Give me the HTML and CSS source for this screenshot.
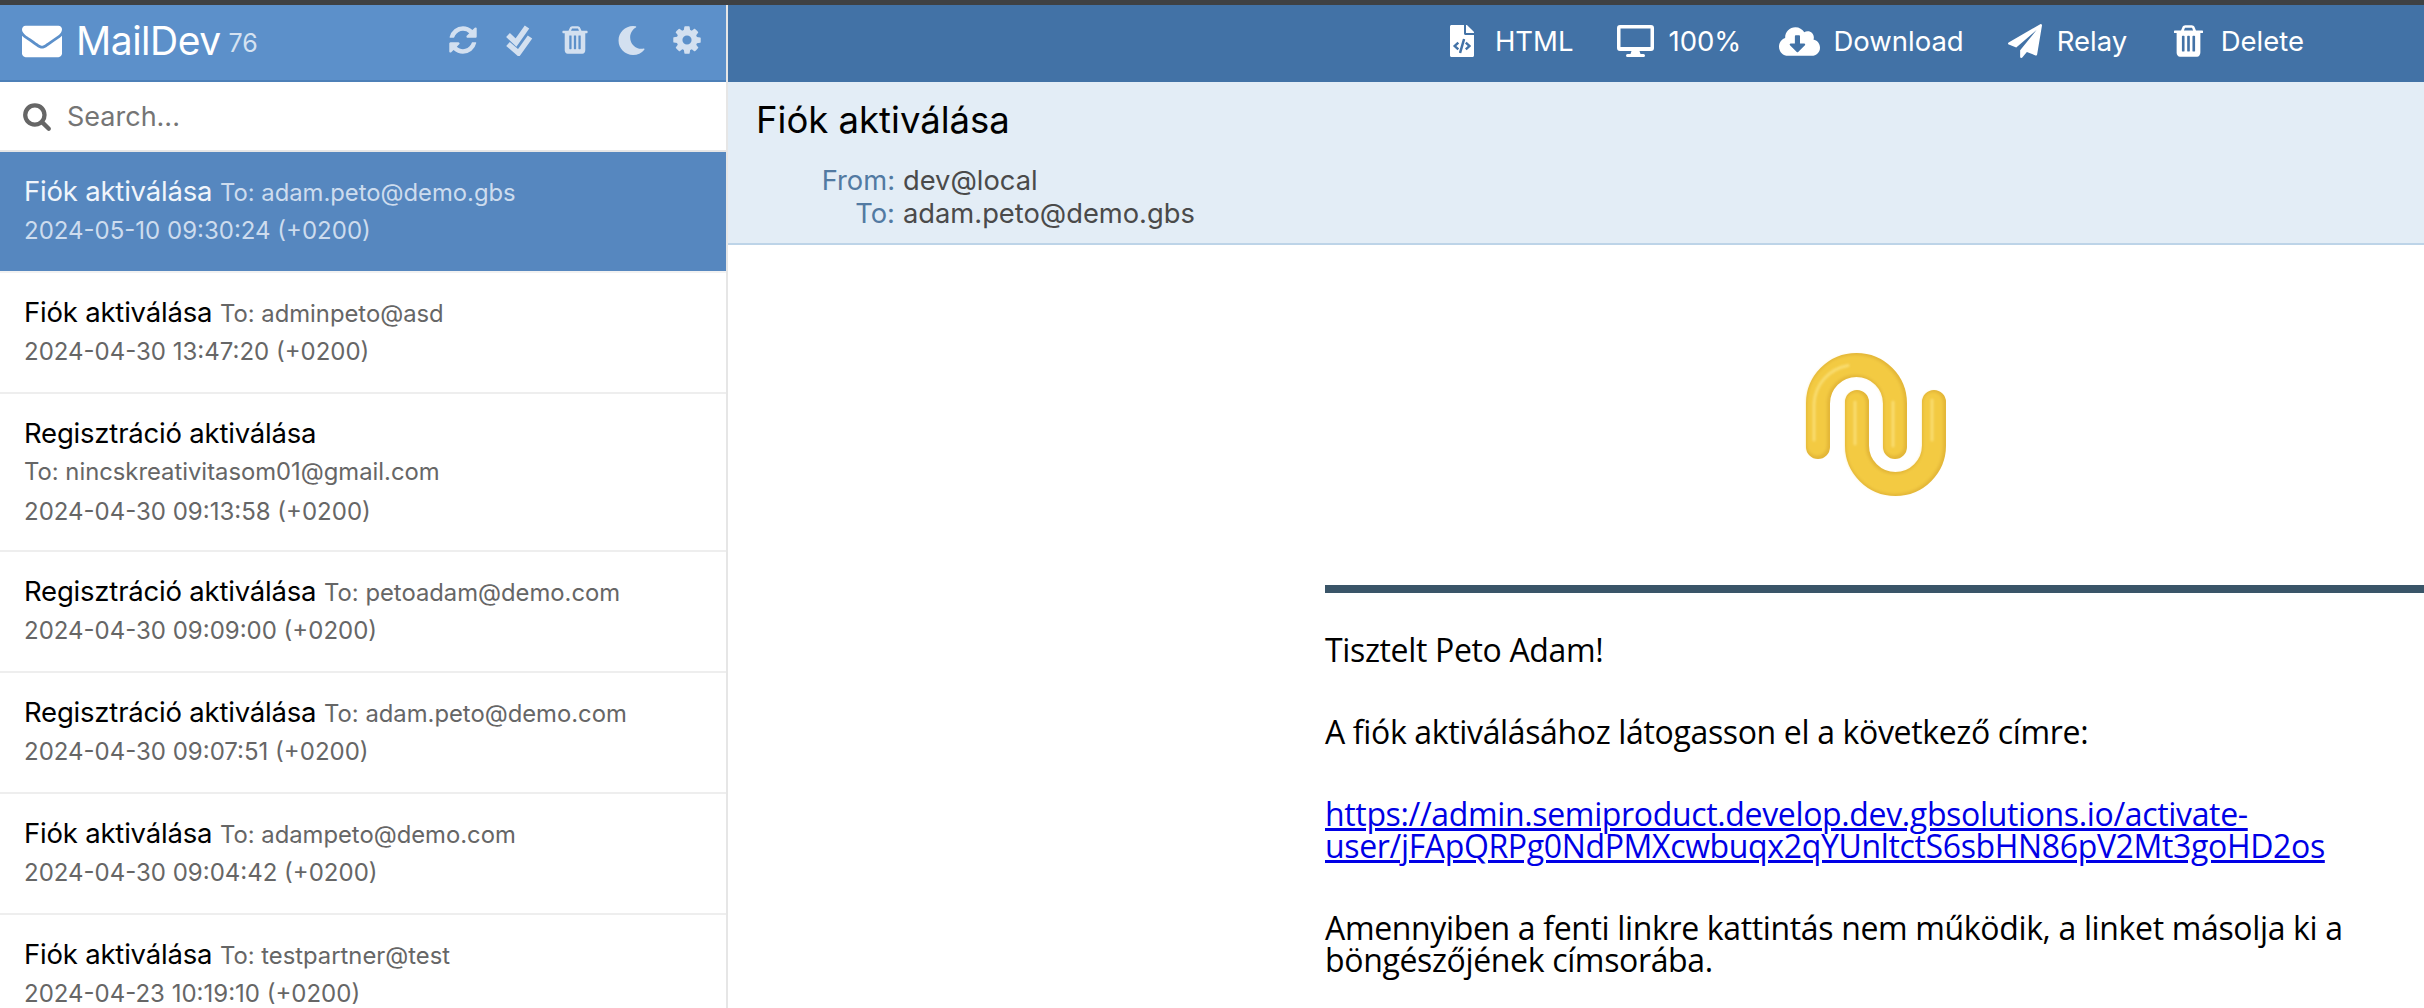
FILE: index.html
```html
<!DOCTYPE html>
<html lang="hu">
<head>
<meta charset="utf-8">
<title>MailDev</title>
<link rel="stylesheet" href="styles.css">
</head>
<body>
<div class="app">
  <aside class="sidebar">
    <header class="brandbar">
      <svg class="ico-env" viewBox="0 0 1792 1792"><path d="M1792 710v794q0 66-47 113t-113 47h-1472q-66 0-113-47t-47-113v-794q44 49 101 87 362 246 497 345 57 42 92.5 65.5t94.5 48 110 24.5h2q51 0 110-24.5t94.5-48 92.5-65.5q170-123 498-345 57-39 100-87zm0-294q0 79-49 151t-122 123q-376 261-468 325-10 7-42.5 30.5t-54 38-52 32.5-57.5 27-50 9h-2q-23 0-50-9t-57.5-27-52-32.5-54-38-42.5-30.5q-91-64-262-182.5t-205-142.5q-62-42-117-115.5t-55-136.5q0-78 41.5-130t118.5-52h1472q65 0 112.5 47t47.5 113z"/></svg>
      <span class="brand">MailDev</span>
      <span class="count">76</span>
      <nav class="tools">
        <span class="tool"><svg viewBox="0 0 1792 1792"><path d="M1639 1056q0 5-1 7-64 268-268 434.5t-478 166.5q-146 0-282.5-55t-243.5-157l-129 129q-19 19-45 19t-45-19-19-45v-448q0-26 19-45t45-19h448q26 0 45 19t19 45-19 45l-137 137q71 66 161 102t187 36q134 0 250-65t186-179q11-17 53-117 8-23 30-23h192q13 0 22.5 9.5t9.5 22.5zm25-800v448q0 26-19 45t-45 19h-448q-26 0-45-19t-19-45 19-45l138-138q-148-137-349-137-134 0-250 65t-186 179q-11 17-53 117-8 23-30 23h-199q-13 0-22.5-9.5t-9.5-22.5v-7q65-268 270-434.5t480-166.5q146 0 284 55.5t245 156.5l130-129q19-19 45-19t45 19 19 45z"/></svg></span>
        <span class="tool"><svg viewBox="0 0 32 32"><path class="tick" d="M5 11l8 7.5L24 3M5 20l10.5 9L27 13"/></svg></span>
        <span class="tool"><svg viewBox="0 0 1792 1792"><path d="M704 1376v-704q0-14-9-23t-23-9h-64q-14 0-23 9t-9 23v704q0 14 9 23t23 9h64q14 0 23-9t9-23zm256 0v-704q0-14-9-23t-23-9h-64q-14 0-23 9t-9 23v704q0 14 9 23t23 9h64q14 0 23-9t9-23zm256 0v-704q0-14-9-23t-23-9h-64q-14 0-23 9t-9 23v704q0 14 9 23t23 9h64q14 0 23-9t9-23zm-544-992h448l-48-117q-7-9-17-11h-317q-10 2-17 11zm928 32v64q0 14-9 23t-23 9h-96v948q0 83-47 143.5t-113 60.5h-832q-66 0-113-58.5t-47-141.5v-952h-96q-14 0-23-9t-9-23v-64q0-14 9-23t23-9h309l70-167q15-37 54-63t79-26h320q40 0 79 26t54 63l70 167h309q14 0 23 9t9 23z"/></svg></span>
        <span class="tool"><svg class="moon" viewBox="0 0 512 512"><path d="M283.211 512c78.962 0 151.079-35.925 198.857-94.792 7.068-8.708-.639-21.43-11.562-19.35-124.203 23.654-238.262-71.576-238.262-196.954 0-72.222 38.662-138.635 101.498-174.394 9.686-5.512 7.25-20.197-3.756-22.23A258.156 258.156 0 0 0 283.211 0c-141.309 0-256 114.511-256 256 0 141.309 114.511 256 256 256z"/></svg></span>
        <span class="tool"><svg viewBox="0 0 1792 1792"><path d="M1152 896q0-106-75-181t-181-75-181 75-75 181 75 181 181 75 181-75 75-181zm512-109v222q0 12-8 23t-20 13l-185 28q-19 54-39 91 35 50 107 138 10 12 10 25t-9 23q-27 37-99 108t-94 71q-12 0-26-9l-138-108q-44 23-91 38-16 136-29 186-7 28-36 28h-222q-14 0-24.5-8.5t-11.5-21.5l-28-184q-49-16-90-37l-141 107q-10 9-25 9-14 0-25-11-126-114-165-168-7-10-7-23 0-12 8-23 15-21 51-66.5t54-70.5q-27-50-41-99l-183-27q-13-2-21-12.5t-8-23.5v-222q0-12 8-23t19-13l186-28q14-46 39-92-40-57-107-138-10-12-10-24 0-10 9-23 26-36 98.5-107.5t94.5-71.5q13 0 26 10l138 107q44-23 91-38 16-136 29-186 7-28 36-28h222q14 0 24.5 8.5t11.5 21.5l28 184q49 16 90 37l142-107q9-9 24-9 13 0 25 10 129 119 165 170 7 8 7 22 0 12-8 23-15 21-51 66.5t-54 70.5q26 50 41 98l183 28q13 2 21 12.5t8 23.5z"/></svg></span>
      </nav>
    </header>
    <div class="search">
      <svg class="ico-search" viewBox="0 0 1792 1792"><path d="M1216 832q0-185-131.5-316.5t-316.5-131.5-316.5 131.5-131.5 316.5 131.5 316.5 316.5 131.5 316.5-131.5 131.5-316.5zm512 832q0 52-38 90t-90 38q-54 0-90-38l-343-342q-179 124-399 124-143 0-273.5-55.5t-225-150-150-225-55.5-273.5 55.5-273.5 150-225 225-150 273.5-55.5 273.5 55.5 225 150 150 225 55.5 273.5q0 220-124 399l343 343q37 37 37 90z"/></svg>
      <span class="placeholder">Search...</span>
    </div>
    <ul class="list">
      <li class="item is-active"><span class="subj">Fiók aktiválása</span> <span class="meta">To: adam.peto@demo.gbs</span><div class="meta date">2024-05-10 09:30:24 (+0200)</div></li>
      <li class="item"><span class="subj">Fiók aktiválása</span> <span class="meta">To: adminpeto@asd</span><div class="meta date">2024-04-30 13:47:20 (+0200)</div></li>
      <li class="item is-tall"><div class="subj">Regisztráció aktiválása</div><div class="meta to-line">To: nincskreativitasom01@gmail.com</div><div class="meta date">2024-04-30 09:13:58 (+0200)</div></li>
      <li class="item"><span class="subj">Regisztráció aktiválása</span> <span class="meta">To: petoadam@demo.com</span><div class="meta date">2024-04-30 09:09:00 (+0200)</div></li>
      <li class="item"><span class="subj">Regisztráció aktiválása</span> <span class="meta">To: adam.peto@demo.com</span><div class="meta date">2024-04-30 09:07:51 (+0200)</div></li>
      <li class="item"><span class="subj">Fiók aktiválása</span> <span class="meta">To: adampeto@demo.com</span><div class="meta date">2024-04-30 09:04:42 (+0200)</div></li>
      <li class="item"><span class="subj">Fiók aktiválása</span> <span class="meta">To: testpartner@test</span><div class="meta date">2024-04-23 10:19:10 (+0200)</div></li>
    </ul>
  </aside>
  <main class="viewer">
    <nav class="toolbar">
      <span class="act act-html"><svg class="i-file" viewBox="0 0 384 512"><path d="M384 121.941V128H256V0h6.059c6.365 0 12.47 2.529 16.971 7.029l97.941 97.941A24.005 24.005 0 0 1 384 121.941zM248 160c-13.2 0-24-10.8-24-24V0H24C10.745 0 0 10.745 0 24v464c0 13.255 10.745 24 24 24h336c13.255 0 24-10.745 24-24V160H248zM123.206 400.505a5.4 5.4 0 0 1-7.633.246l-64.866-60.812a5.4 5.4 0 0 1 0-7.879l64.866-60.812a5.4 5.4 0 0 1 7.633.246l19.579 20.885a5.4 5.4 0 0 1-.372 7.747L101.65 336l40.763 35.874a5.4 5.4 0 0 1 .372 7.747l-19.579 20.884zm51.295 50.479l-27.453-7.97a5.402 5.402 0 0 1-3.681-6.692l61.44-211.626a5.402 5.402 0 0 1 6.692-3.681l27.452 7.97a5.4 5.4 0 0 1 3.68 6.692l-61.44 211.626a5.397 5.397 0 0 1-6.69 3.681zm160.792-111.045l-64.866 60.812a5.4 5.4 0 0 1-7.633-.246l-19.58-20.885a5.4 5.4 0 0 1 .372-7.747L284.35 336l-40.763-35.874a5.4 5.4 0 0 1-.372-7.747l19.58-20.885a5.4 5.4 0 0 1 7.633-.246l64.866 60.812a5.4 5.4 0 0 1-.001 7.879z"/></svg>HTML</span>
      <span class="act act-zoom"><svg class="i-mon" viewBox="0 0 37 32"><path fill-rule="evenodd" d="M3 0h31a3 3 0 0 1 3 3v20a3 3 0 0 1-3 3H22.5l1 3h3a1.5 1.5 0 0 1 0 3h-16a1.5 1.5 0 0 1 0-3h3l1-3H3a3 3 0 0 1-3-3V3a3 3 0 0 1 3-3zm.5 3.5v18.5h30V3.5z"/></svg>100%</span>
      <span class="act act-down"><svg class="i-cloud" viewBox="0 0 640 512"><path d="M537.6 226.6c4.1-10.7 6.4-22.4 6.4-34.6 0-53-43-96-96-96-19.7 0-38.1 6-53.3 16.2C367 64.2 315.3 32 256 32c-88.4 0-160 71.6-160 160 0 2.7.1 5.4.2 8.1C40.2 219.8 0 273.2 0 336c0 79.5 64.5 144 144 144h368c70.7 0 128-57.3 128-128 0-61.9-44-113.6-102.4-125.4zm-132.9 88.7L299.3 420.7c-6.2 6.2-16.4 6.2-22.6 0L171.3 315.3c-10.1-10.1-2.9-27.3 11.3-27.3H248V176c0-8.8 7.2-16 16-16h48c8.8 0 16 7.2 16 16v112h65.4c14.2 0 21.4 17.2 11.3 27.3z"/></svg>Download</span>
      <span class="act act-relay"><svg class="i-plane" viewBox="0 0 1792 1792"><path d="M1764 11q33 24 27 64l-256 1536q-5 29-32 45-14 8-31 8-11 0-24-5l-453-185-242 295q-18 23-49 23-13 0-22-4-19-7-30.5-23.5t-11.5-36.5v-349l864-1059-1069 925-395-162q-37-14-40-55-2-40 32-59l1664-960q15-9 32-9 20 0 36 11z"/></svg>Relay</span>
      <span class="act act-del"><svg class="i-trash" viewBox="192 128 1408 1536"><path d="M704 1376v-704q0-14-9-23t-23-9h-64q-14 0-23 9t-9 23v704q0 14 9 23t23 9h64q14 0 23-9t9-23zm256 0v-704q0-14-9-23t-23-9h-64q-14 0-23 9t-9 23v704q0 14 9 23t23 9h64q14 0 23-9t9-23zm256 0v-704q0-14-9-23t-23-9h-64q-14 0-23 9t-9 23v704q0 14 9 23t23 9h64q14 0 23-9t9-23zm-544-992h448l-48-117q-7-9-17-11h-317q-10 2-17 11zm928 32v64q0 14-9 23t-23 9h-96v948q0 83-47 143.5t-113 60.5h-832q-66 0-113-58.5t-47-141.5v-952h-96q-14 0-23-9t-9-23v-64q0-14 9-23t23-9h309l70-167q15-37 54-63t79-26h320q40 0 79 26t54 63l70 167h309q14 0 23 9t9 23z"/></svg>Delete</span>
    </nav>
    <section class="headers">
      <h1 class="title">Fiók aktiválása</h1>
      <div class="hrow"><span class="hlabel">From:</span><span class="hval">dev@local</span></div>
      <div class="hrow"><span class="hlabel">To:</span><span class="hval">adam.peto@demo.gbs</span></div>
    </section>
    <section class="mail">
      <div class="logo-wrap">
        <svg class="logo" viewBox="0 0 170 170">
          <defs>
            <filter id="soft" x="-30%" y="-30%" width="160%" height="160%"><feGaussianBlur stdDeviation="1.5"/></filter>
            <filter id="softer" x="-30%" y="-30%" width="160%" height="160%"><feGaussianBlur stdDeviation="0.8"/></filter>
          </defs>
          <g fill="none" stroke-linecap="round">
            <path class="l-base" d="M28 107V63.5a38.5 38.5 0 0 1 77 0V107"/>
            <path class="l-body" d="M27 106V63.5a38.5 38.5 0 0 1 77 0V106" filter="url(#soft)"/>
            <path class="l-gloss" d="M24 100V63.5a41 41 0 0 1 34-38M103 62V106" filter="url(#softer)"/>
            <path class="l-base" d="M67 62V105.5a38.5 38.5 0 0 0 77 0V62"/>
            <path class="l-body" d="M66 62V105.5a38.5 38.5 0 0 0 77 0V62" filter="url(#soft)"/>
            <path class="l-gloss" d="M65 62V104M142 60V100" filter="url(#softer)"/>
          </g>
        </svg>
      </div>
      <div class="mail-bar"></div>
      <p class="para">Tisztelt Peto Adam!</p>
      <p class="para">A fiók aktiválásához látogasson el a következő címre:</p>
      <p class="para"><a class="mlink" href="#">https://admin.semiproduct.develop.dev.gbsolutions.io/activate-<br>user/jFApQRPg0NdPMXcwbuqx2qYUnltctS6sbHN86pV2Mt3goHD2os</a></p>
      <p class="para">Amennyiben a fenti linkre kattintás nem működik, a linket másolja ki a<br>böngészőjének címsorába.</p>
    </section>
  </main>
</div>
</body>
</html>
```
FILE: styles.css
```css
* { box-sizing: border-box; }
html, body { margin: 0; height: 100%; overflow: hidden; }
body {
  background: #fff;
  font-family: Inter, "Noto Sans", sans-serif;
  border-top: 5px solid #3f4143;
}
svg { fill: currentColor; display: block; flex: none; }

.app { display: flex; height: 1003px; overflow: hidden; }

/* sidebar */
.sidebar { width: 728px; flex: none; border-right: 2px solid #e6e6e6; overflow: hidden; }
.brandbar {
  height: 77px;
  display: flex;
  align-items: center;
  padding: 0 11px 5px 22px;
  background: #5c90ca;
  border-bottom: 2px solid #4d80b8;
  color: #fff;
}
.ico-env { width: 40px; height: 40px; margin-right: 14px; }
.brand { font-size: 39px; letter-spacing: -0.5px; }
.count { font-size: 25px; margin: 6px 0 0 8px; color: #d5e2f1; }
.tools { margin-left: auto; display: flex; color: #d3e0f0; }
.tool { width: 56px; display: flex; justify-content: center; align-items: center; }
.tool svg { width: 32px; height: 32px; }
.tool .moon { width: 29px; height: 29px; }
.tick { fill: none; stroke: currentColor; stroke-width: 5.5; }

.search {
  height: 70px;
  display: flex;
  align-items: center;
  padding-left: 22px;
  border-bottom: 2px solid #e6e6e6;
  color: #666;
}
.ico-search { width: 30px; height: 30px; margin-right: 15px; }
.placeholder { font-size: 27px; color: #757575; }

.list { list-style: none; margin: 0; padding: 0; }
.item {
  padding: 20px 24px 21px;
  border-bottom: 2px solid #eee;
  font-size: 27.5px;
  line-height: 38px;
  color: #000;
}
.item.is-tall { padding-bottom: 19px; }
.item > span { line-height: 1; }
.subj { font-size: 27.5px; letter-spacing: -0.2px; }
.meta { font-size: 23.8px; color: #666; }
.to-line { margin-top: 1px; }
.date { font-size: 24px; margin-top: 2px; }
.is-active { background: #5687bf; color: #f0f5fb; border-bottom-color: #f2f2f2; }
.is-active .meta { color: #cddcee; }

/* viewer */
.viewer { flex: 1; min-width: 0; display: flex; flex-direction: column; }
.toolbar {
  height: 77px;
  flex: none;
  display: flex;
  align-items: center;
  justify-content: flex-end;
  padding: 0 120px 5px 0;
  background: #4272a6;
  color: #fff;
  font-size: 27.5px;
}
.act { display: flex; align-items: center; }
.act-zoom { margin-left: 44px; }
.act-down { margin-left: 38px; }
.act-relay { margin-left: 44px; }
.act-del { margin-left: 46.5px; }
.i-file { width: 24px; height: 32px; margin-right: 21px; }
.i-mon { width: 37px; height: 32px; margin-right: 14px; }
.i-cloud { width: 41px; height: 33px; margin-right: 13px; }
.i-plane { width: 34px; height: 34px; margin-right: 15px; }
.i-trash { width: 29px; height: 32px; margin-right: 18px; }

.headers {
  height: 163px;
  flex: none;
  padding: 16px 0 0 28px;
  background: #e3edf6;
  border-bottom: 2px solid #bdd4e8;
}
.title { margin: 0 0 22px; font-size: 36.5px; font-weight: 400; line-height: 44px; color: #000; }
.hrow { display: flex; font-size: 27.3px; line-height: 33px; color: #4a4a4a; }
.hlabel { width: 139px; text-align: right; margin-right: 8px; color: #527aa2; }

/* message */
.mail { padding-left: 597px; font-family: "Open Sans", sans-serif; color: #000; }
.logo-wrap { padding-top: 95px; display: flex; justify-content: center; }
.logo { width: 170px; height: 170px; }
.mail-bar { height: 8px; margin-top: 75px; background: #3a5568; }
.para { margin: 0 0 50px; font-size: 32px; line-height: 32px; letter-spacing: -0.35px; }
.mail-bar + .para { margin-top: 41px; }
.mlink { color: #0000e6; }
.l-base { stroke: #e3b637; stroke-width: 24; }
.l-body { stroke: #f3ca42; stroke-width: 20; }
.l-gloss { stroke: #fde98f; stroke-width: 3; opacity: .6; }
```
